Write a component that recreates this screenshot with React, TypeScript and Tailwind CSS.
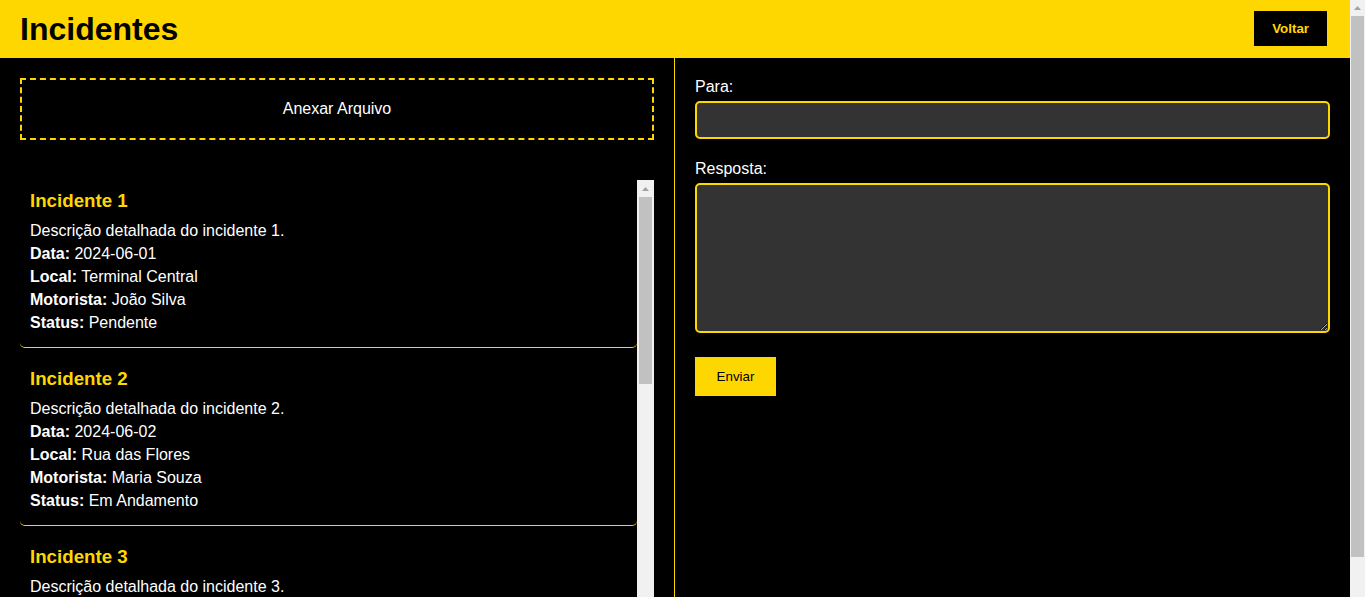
const incidentes = [
  { id: 1, data: "2024-06-01", local: "Terminal Central", motorista: "João Silva", status: "Pendente" },
  { id: 2, data: "2024-06-02", local: "Rua das Flores", motorista: "Maria Souza", status: "Em Andamento" },
  { id: 3, data: "2024-06-03", local: "Avenida Brasil", motorista: "Carlos Lima", status: "Resolvido" },
  { id: 4, data: "2024-06-04", local: "Praça da Sé", motorista: "Ana Pereira", status: "Pendente" },
  { id: 5, data: "2024-06-05", local: "Estação Norte", motorista: "Pedro Alves", status: "Em Andamento" },
];

function UpArrow() {
  return (
    <svg width="7" height="4" viewBox="0 0 7 4">
      <path d="M0 4 L3.5 0 L7 4 Z" fill="#a3a3a3" />
    </svg>
  );
}

// classic scrollbar look (the browser here draws none)
function ScrollBar({ width, button, thumb }: { width: string; button: string; thumb: string }) {
  return (
    <div className={`${width} shrink-0 bg-[#f1f1f1] flex flex-col`}>
      <div className={`${button} flex items-center justify-center`}>
        <UpArrow />
      </div>
      <div className={`${thumb} bg-[#c1c1c1] mx-[2px]`} />
    </div>
  );
}

export default function App() {
  return (
    <div className="flex bg-black text-white font-['Liberation_Sans',Arial,sans-serif]">
      <div className="flex-1 min-w-0">
        {/* Header */}
        <header className="h-[58px] bg-[#FFD700] flex items-center justify-between px-5">
          <h1 className="text-[32px] font-bold text-black leading-none">Incidentes</h1>
          <button className="bg-black text-[#FFD700] text-[13.33px] font-bold px-[18px] h-[35px] mt-[-1px] mr-[3px]">
            Voltar
          </button>
        </header>

        <div className="flex">
          {/* Left column */}
          <div className="w-1/2 border-r border-[#FFD700] p-5">
            <div className="h-[62px] border-2 border-dashed border-[#FFD700] flex items-center justify-center text-base">
              Anexar Arquivo
            </div>

            <div className="mt-10 h-[423px] flex">
              <div className="flex-1 min-w-0 overflow-hidden flex flex-col gap-[10px]">
                {incidentes.map((inc) => (
                  <div key={inc.id} className="shrink-0 border-b border-[#FFD700] rounded-[5px] px-[10px] pt-[10px] pb-[10px]">
                    <h3 className="text-[18.72px] font-bold text-[#FFD700] leading-[22px] mb-[10px]">
                      Incidente {inc.id}
                    </h3>
                    <p className="my-[5px] leading-[18px]">Descrição detalhada do incidente {inc.id}.</p>
                    <p className="my-[5px] leading-[18px]"><strong>Data:</strong> {inc.data}</p>
                    <p className="my-[5px] leading-[18px]"><strong>Local:</strong> {inc.local}</p>
                    <p className="my-[5px] leading-[18px]"><strong>Motorista:</strong> {inc.motorista}</p>
                    <p className="my-[5px] leading-[18px]"><strong>Status:</strong> {inc.status}</p>
                  </div>
                ))}
              </div>
              <ScrollBar width="w-[17px]" button="h-[17px]" thumb="h-[187px]" />
            </div>
          </div>

          {/* Right column */}
          <div className="w-1/2 p-5">
            <label className="block leading-[18px]">Para:</label>
            <input
              type="text"
              className="block w-full h-[38px] mt-[5px] bg-[#333] border-2 border-[#FFD700] rounded-[5px] px-2 text-white outline-none"
            />
            <label className="block mt-[21px] leading-[18px]">Resposta:</label>
            <textarea className="block w-full h-[150px] mt-[5px] bg-[#333] border-2 border-[#FFD700] rounded-[5px] px-2 text-white outline-none" />
            <button className="mt-[24px] bg-[#FFD700] text-black text-[13.33px] w-[81px] h-[39px]">
              Enviar
            </button>
          </div>
        </div>
      </div>

      {/* page scrollbar */}
      <div className="h-screen self-start">
        <ScrollBar width="w-[15px] h-full" button="h-[16px]" thumb="h-[541px] !mx-px" />
      </div>
    </div>
  );
}
